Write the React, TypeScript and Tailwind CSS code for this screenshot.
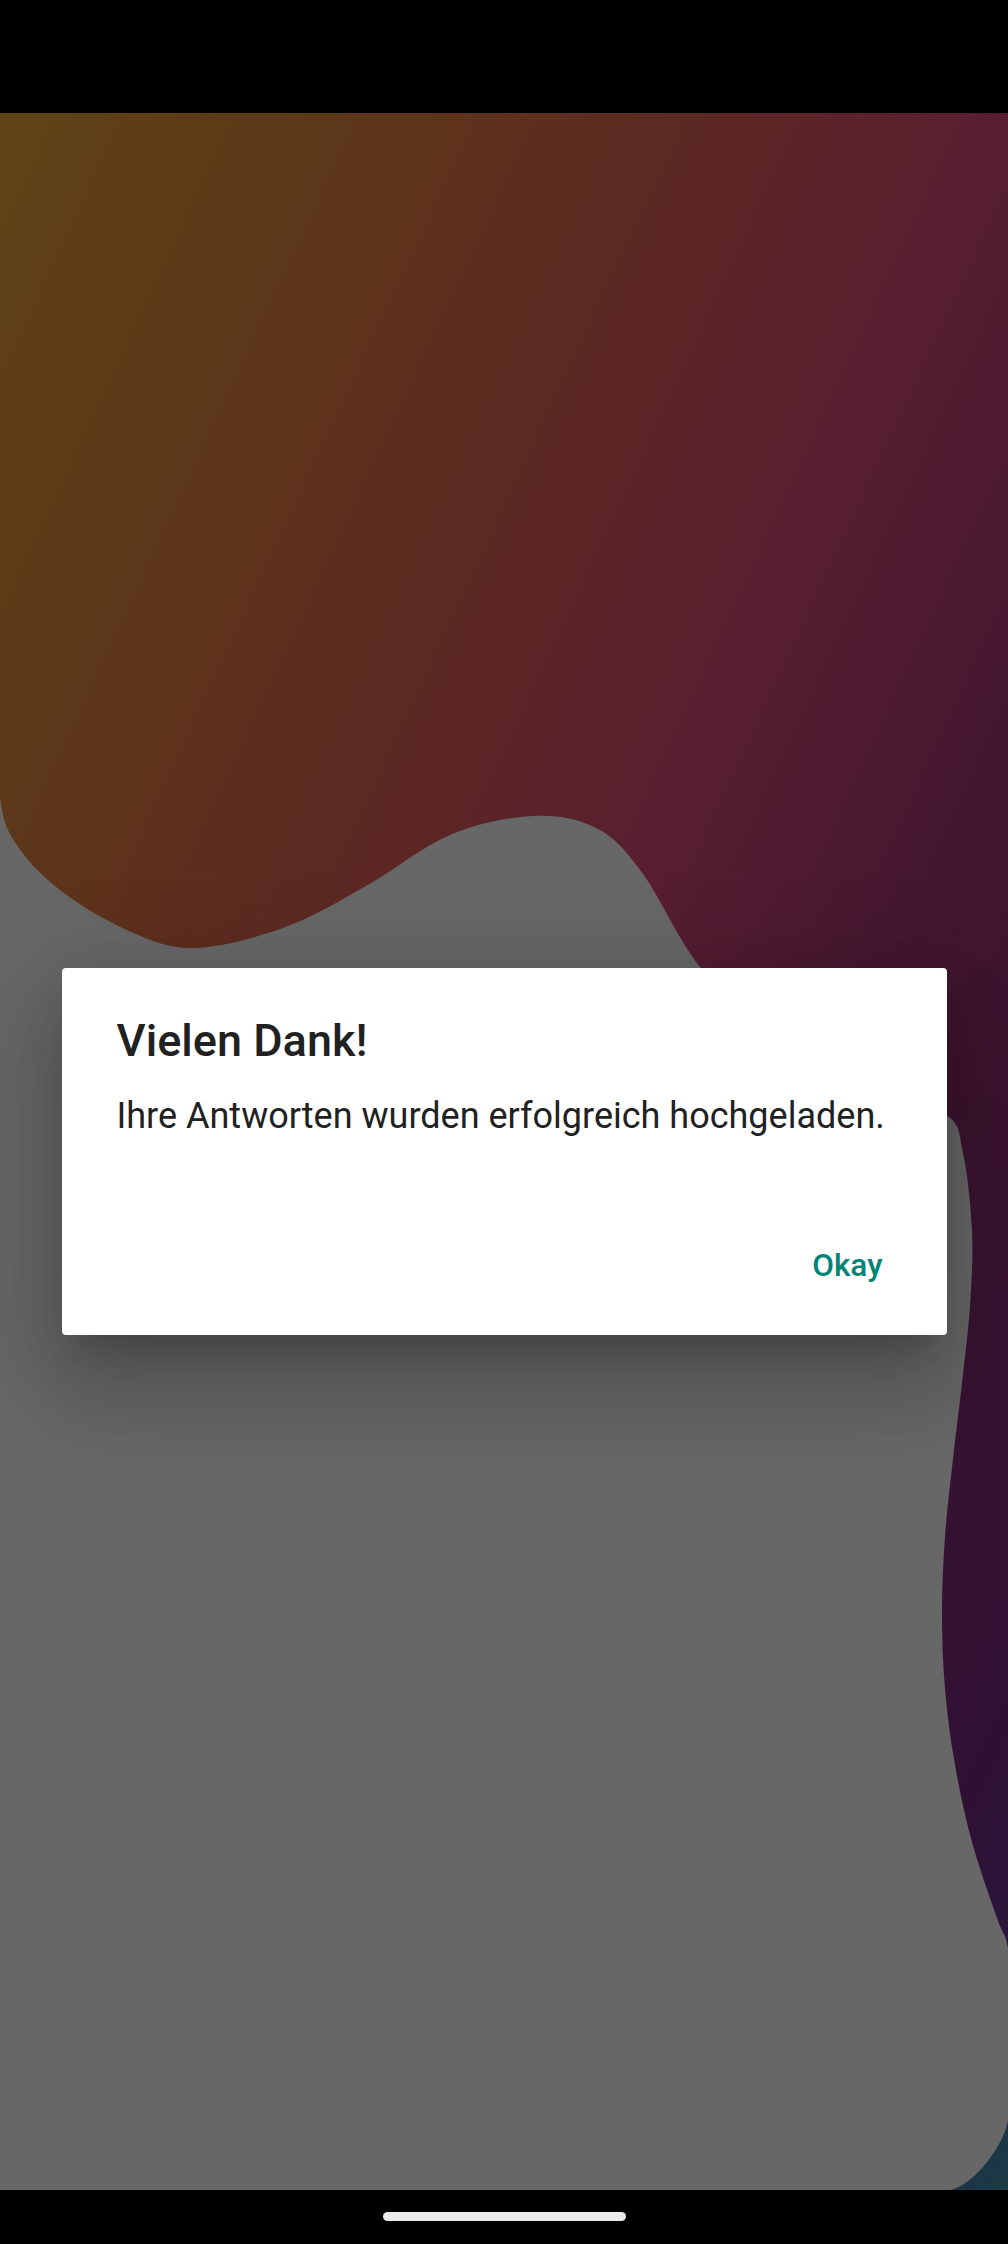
import React from "react";

type Pt = [number, number];

function smoothPath(points: Pt[]): string {
  let d = "";
  for (let i = 1; i < points.length - 2; i++) {
    const p0 = points[i - 1];
    const p1 = points[i];
    const p2 = points[i + 1];
    const p3 = points[i + 2];
    const c1x = p1[0] + (p2[0] - p0[0]) / 6;
    const c1y = p1[1] + (p2[1] - p0[1]) / 6;
    const c2x = p2[0] - (p3[0] - p1[0]) / 6;
    const c2y = p2[1] - (p3[1] - p1[1]) / 6;
    d += ` C ${c1x.toFixed(1)} ${c1y.toFixed(1)}, ${c2x.toFixed(1)} ${c2y.toFixed(1)}, ${p2[0]} ${p2[1]}`;
  }
  return d;
}

// first and last points are phantom tangent guides
const boundary: Pt[] = [
  [-4, 560],
  [0, 684],
  [19, 735],
  [64, 780],
  [129, 818],
  [193, 835],
  [283, 815],
  [366, 773],
  [450, 722],
  [534, 703],
  [598, 716],
  [643, 761],
  [700, 854],
  [780, 935],
  [870, 980],
  [946, 1002],
  [963, 1040],
  [972, 1117],
  [970, 1193],
  [962, 1270],
  [953, 1346],
  [945, 1423],
  [942, 1499],
  [945, 1576],
  [955, 1652],
  [972, 1729],
  [997, 1805],
  [1008, 1835],
  [1012, 1900],
];

const blobD =
  `M 0 684` +
  smoothPath(boundary) +
  ` L 1008 2007 C 1005 2030, 975 2072, 950 2077 L 0 2077 Z`;

function Background() {
  return (
    <svg
      className="absolute inset-0 h-full w-full"
      viewBox="0 0 1008 2077"
      preserveAspectRatio="none"
    >
      <defs>
        <linearGradient
          id="bg"
          gradientUnits="userSpaceOnUse"
          x1="0"
          y1="0"
          x2="1623"
          y2="758"
        >
          <stop offset="0" stopColor="#5f4315" />
          <stop offset="0.14" stopColor="#5c3a18" />
          <stop offset="0.255" stopColor="#5e301c" />
          <stop offset="0.396" stopColor="#5c2526" />
          <stop offset="0.51" stopColor="#581e31" />
          <stop offset="0.651" stopColor="#44172f" />
          <stop offset="0.746" stopColor="#3b1430" />
          <stop offset="0.888" stopColor="#2f1034" />
          <stop offset="0.935" stopColor="#2a1538" />
          <stop offset="0.975" stopColor="#1c3445" />
          <stop offset="1" stopColor="#1a3b46" />
        </linearGradient>
      </defs>
      <rect x="0" y="0" width="1008" height="2077" fill="url(#bg)" />
      <path d={blobD} fill="#676767" />
    </svg>
  );
}

const medium = { fontFamily: "'Roboto Medium', Roboto, 'Noto Sans', Arial, sans-serif" };

export default function App() {
  return (
    <div
      className="flex h-[2244px] w-[1008px] flex-col bg-black"
      style={{ fontFamily: "Roboto, 'Noto Sans', Arial, sans-serif" }}
    >
      <div className="h-[113px] w-full shrink-0 bg-black" />
      <div className="relative flex h-[2077px] w-full shrink-0 items-center justify-center overflow-hidden">
        <Background />
        <div className="relative w-[885px] rounded-[4px] bg-white pb-[49px] pl-[55px] pr-[55px] pt-[47px] shadow-[0_54px_85px_7px_rgba(0,0,0,0.14),0_20px_104px_18px_rgba(0,0,0,0.12),0_25px_34px_-16px_rgba(0,0,0,0.2)]">
          <div
            className="text-[45px] font-medium leading-[52px] text-[#212121]"
            style={medium}
          >
            Vielen Dank!
          </div>
          <div className="mt-[25px] text-[36px] leading-[48px] text-[#212121]">
            Ihre Antworten wurden erfolgreich hochgeladen.
          </div>
          <div className="mt-[106px] flex justify-end pr-[9px]">
            <span
              className="text-[31.5px] font-medium leading-[40px] text-[#008577]"
              style={medium}
            >
              Okay
            </span>
          </div>
        </div>
      </div>
      <div className="flex h-[54px] w-full shrink-0 justify-center bg-black pt-[22px]">
        <div className="h-[9px] w-[243px] rounded-full bg-[#ebebeb]" />
      </div>
    </div>
  );
}
